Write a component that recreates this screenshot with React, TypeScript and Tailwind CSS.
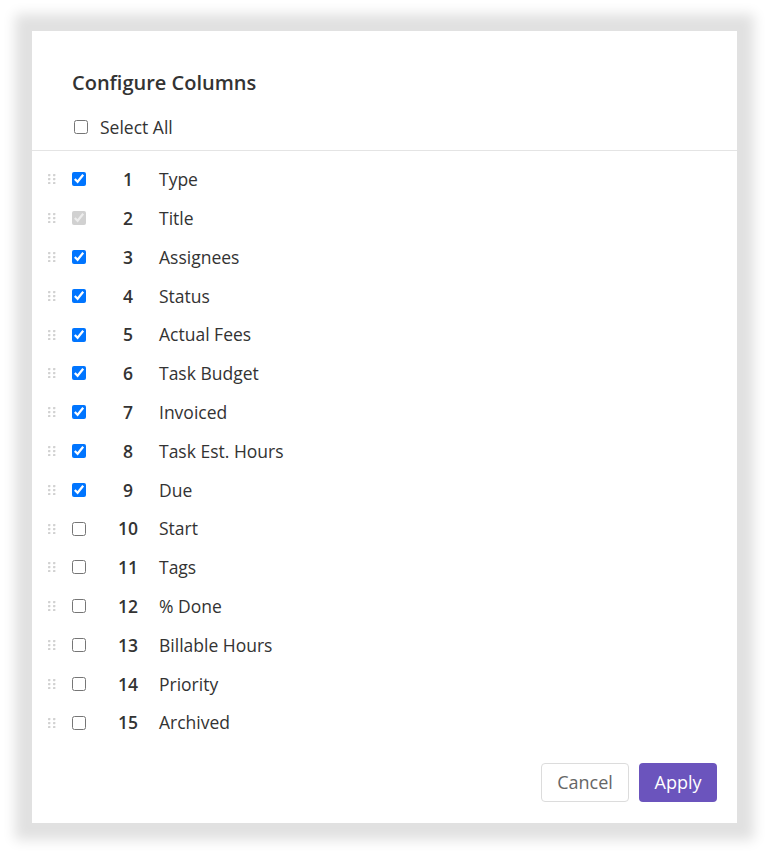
import React from "react";

const rows: { n: number; name: string; checked: boolean; disabled?: boolean }[] = [
  { n: 1, name: "Type", checked: true },
  { n: 2, name: "Title", checked: true, disabled: true },
  { n: 3, name: "Assignees", checked: true },
  { n: 4, name: "Status", checked: true },
  { n: 5, name: "Actual Fees", checked: true },
  { n: 6, name: "Task Budget", checked: true },
  { n: 7, name: "Invoiced", checked: true },
  { n: 8, name: "Task Est. Hours", checked: true },
  { n: 9, name: "Due", checked: true },
  { n: 10, name: "Start", checked: false },
  { n: 11, name: "Tags", checked: false },
  { n: 12, name: "% Done", checked: false },
  { n: 13, name: "Billable Hours", checked: false },
  { n: 14, name: "Priority", checked: false },
  { n: 15, name: "Archived", checked: false },
];

function Handle() {
  return (
    <svg width="8" height="10" viewBox="0 0 8 10" className="block">
      {[0, 4, 8].map((y) =>
        [0, 5].map((x) => (
          <rect key={`${x}-${y}`} x={x} y={y} width="2.4" height="2.2" rx="0.6" fill="#d2d2d2" />
        ))
      )}
    </svg>
  );
}

export default function App() {
  return (
    <div className="min-h-[854px] w-[768px] bg-white pt-[31px] pl-[32px]" style={{ fontFamily: '"Open Sans", "Liberation Sans", sans-serif' }}>
      <div className="w-[705px] h-[792px] bg-white shadow-[0_0_12px_17px_#e1e1e1] flex flex-col">
        <div className="pl-[40px] pt-[39px]">
          <h2 className="text-[20px] leading-[26px] font-semibold text-[#333]">Configure Columns</h2>
          <label className="flex items-center mt-[20px] h-[22px]">
            <input type="checkbox" className="w-[14px] h-[14px] m-0 ml-[2px]" />
            <span className="ml-[12px] text-[17.5px] text-[#333]">Select All</span>
          </label>
        </div>
        <div className="mt-[11.5px] border-t border-[#e4e4e4]" />
        <div className="mt-[9.5px] flex flex-col">
          {rows.map((r) => (
            <div key={r.n} className="h-[38.8px] flex items-center">
              <div className="w-[16px]" />
              <Handle />
              <input
                type="checkbox"
                defaultChecked={r.checked}
                disabled={r.disabled}
                className="w-[14px] h-[14px] m-0 ml-[16px]"
              />
              <div className="w-[72px] text-center pl-[12px] text-[17.5px] font-semibold text-[#333]">{r.n}</div>
              <span className="ml-[1px] text-[17.5px] text-[#333]">{r.name}</span>
            </div>
          ))}
        </div>
        <div className="flex-1" />
        <div className="flex justify-end gap-[10px] pr-[20px] pb-[21px]">
          <button className="h-[39px] w-[88px] rounded-[4px] border border-[#dcdcdc] bg-white text-[18px] text-[#666]">Cancel</button>
          <button className="h-[39px] w-[78px] rounded-[4px] bg-[#6b54bd] text-[18px] text-white">Apply</button>
        </div>
      </div>
    </div>
  );
}
